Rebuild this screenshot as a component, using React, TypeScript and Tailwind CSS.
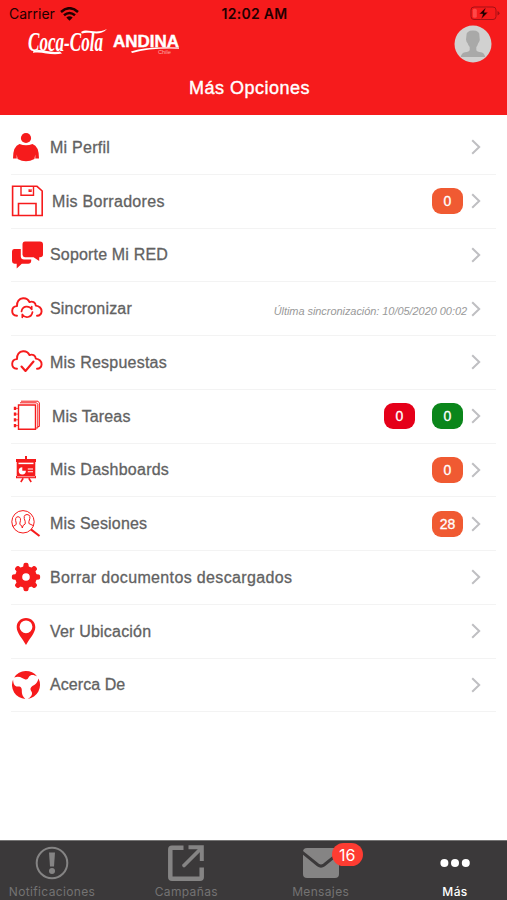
import type { ReactNode } from "react";

const RED = "#f61b1c";

function PersonIcon() {
  return (
    <svg width="30" height="30" viewBox="0 0 30 30" fill={RED}>
      <circle cx="15" cy="6" r="5.1" />
      <path d="M8.5 12Q15 14.5 21.5 12Q28 14 28 26.5H24.3V22.5L23.4 27Q15 31.5 6.6 27L5.7 22.5V26.5H2Q2 14 8.5 12Z" />
    </svg>
  );
}

function FloppyIcon() {
  return (
    <svg width="32" height="32" viewBox="0 0 32 32" fill="none" stroke={RED} strokeWidth="1.6">
      <path d="M1.6 1.3H26L31.2 6V30.5H1.6Z" />
      <path d="M10 1.3V10.2H22.5V1.3M18.2 4.2V6.2H20V4.2" strokeWidth="1.4" />
      <path d="M7.5 30.5V18.5H25V30.5" />
    </svg>
  );
}

function ChatIcon() {
  return (
    <svg className="ml-[2px]" width="32" height="30" viewBox="0 0 32 30" fill={RED}>
      <path d="M3 9H9.8V16.5Q10 19.5 13 19.5H20.2V21Q20 23.7 17.2 23.7H10.8L5.7 28.5V23.7H3.5Q1 23.5 1 21V11.5Q1 9 3 9Z" />
      <path d="M14 1.5H29Q32 1.5 32 4.5V14.5Q32 17.2 29 17.2H28.2V21L22.6 17.2H14Q11.5 17 11.5 14.5V4.5Q11.5 1.5 14 1.5Z" />
    </svg>
  );
}

function CloudIcon({ children }: { children: ReactNode }) {
  return (
    <svg className="ml-[2px]" width="32" height="26" viewBox="0 0 32 26" fill="none" stroke={RED} strokeWidth="1.9" strokeLinecap="round" strokeLinejoin="round">
      <path d="M6 19.8C2.6 19.6 1.1 17.4 1.2 14.8C1.3 12 3.5 10.3 6 10.1C5.6 5.5 8.2 2.5 12 2.2C15.2 2 17.5 3.7 18.5 6.1C21.5 4.8 24.5 6.5 24.8 9.6C28.2 9.9 30.8 12.4 30.6 15.4C30.4 18 28.8 19.7 26 19.8" />
      {children}
    </svg>
  );
}

function NotebookIcon() {
  return (
    <svg width="32" height="32" viewBox="0 0 32 32" fill="none" stroke={RED} strokeWidth="1.4">
      <path d="M7.5 5H24.5V29.2H7.5Z" />
      <path d="M9 2.8H25.5L26.8 4.2V28H24.5M10 1.2H27L28.4 3V26.5H26.8" strokeWidth="1" />
      <path d="M4 6.8V10M4 12.5V15.7M4 18.2V21.4M4 24V27.2" strokeWidth="2.4" />
      <path d="M5 8.4H7.5M5 14.1H7.5M5 19.8H7.5M5 25.6H7.5" strokeWidth=".8" />
    </svg>
  );
}

function BoardIcon() {
  return (
    <svg width="22" height="27" viewBox="0 0 22 27" fill={RED}>
      <path d="M10 0H12V4H10ZM1 3H21V6H1ZM1.7 6H20.3V20H1.7ZM1 20H21V22.3H1Z" />
      <path d="M3.5 7.4H18.5" stroke="white" strokeWidth="1.5" />
      <path d="M7.3 11.2A3.6 3.6 0 1 0 10.9 14.8H7.3Z" fill="white" />
      <path d="M12.8 13H18M12.8 15.8H18" stroke="white" strokeWidth="1.1" />
      <path d="M2 20.7H20" stroke="white" strokeWidth=".6" />
      <path d="M8.2 22.3L5.8 26M13.8 22.3L16.2 26" stroke={RED} strokeWidth="1.6" />
    </svg>
  );
}

function SearchPeopleIcon() {
  return (
    <svg width="30" height="27" viewBox="0 0 30 27" fill="none" stroke={RED} strokeWidth="1">
      <circle cx="12" cy="11.8" r="11.2" />
      <path d="M19.9 19.4L28.5 26" strokeWidth="2" />
      <path d="M2 16.5L5.2 14.5V13Q3.3 7 7 6.7Q10.8 7 8.9 13V14.5Q11.5 15.4 11.2 18M11.4 18Q11.2 15.2 14.2 14V11.5Q11.4 4.7 16 4.5Q20.7 4.7 17.9 11.5V13.5L22 15.5" />
    </svg>
  );
}

function GearIcon() {
  return (
    <svg width="30" height="30" viewBox="-15 -15 30 30" fill={RED}>
      <circle r="7.3" fill="none" stroke={RED} strokeWidth="7" />
      {[0, 45, 90, 135, 180, 225, 270, 315].map((a) => (
        <path key={a} transform={`rotate(${a})`} d="M-3 -9L-2.4 -13Q-2.1 -14.2 0 -14.2Q2.1 -14.2 2.4 -13L3 -9Z" />
      ))}
    </svg>
  );
}

function PinIcon() {
  return (
    <svg width="20" height="29" viewBox="0 0 20 29" fill={RED}>
      <path fillRule="evenodd" d="M10 1C4.5 1 .7 5 .7 10.2C.7 16 6.5 21.5 10 28C13.5 21.5 19.3 16 19.3 10.2C19.3 5 15.5 1 10 1ZM10 3.4A6.4 6.4 0 1 1 10 16.2A6.4 6.4 0 0 1 10 3.4Z" />
    </svg>
  );
}

function SwirlIcon() {
  return (
    <svg width="30" height="30" viewBox="-15 -15 30 30" fill={RED}>
      {[0, 120, 240].map((a) => (
        <path key={a} transform={`rotate(${a})`} d="M-11.8 -7.6A14 14 0 0 1 11.2 -8.4C7.5 -10.6 4.4 -10.4 3 -8.2C2 -6.4 1.6 -5.4 -.6 -5.6C-3.4 -6 -5.6 -9.6 -11.8 -7.6Z" />
      ))}
    </svg>
  );
}

function Chevron() {
  return (
    <svg className="shrink-0" width="10" height="16" viewBox="0 0 10 16" fill="none" stroke="#bfbfc2" strokeWidth="2">
      <path d="M1.2 1.2L8.2 8L1.2 14.8" />
    </svg>
  );
}

function Badge({ color, children }: { color: string; children: ReactNode }) {
  return (
    <span className={`flex h-[26px] w-[31px] items-center justify-center rounded-[9px] pt-px text-[14px] text-white [-webkit-text-stroke:0.3px] ${color}`}>
      {children}
    </span>
  );
}

type Item = { label: string; icon: ReactNode; track: string; wide?: boolean; extra?: ReactNode };

const items: Item[] = [
  { label: "Mi Perfil", icon: <PersonIcon />, track: "tracking-[0.25px]" },
  { label: "Mis Borradores", icon: <FloppyIcon />, track: "tracking-[0.3px]", wide: true, extra: <Badge color="bg-[#f05a32]">0</Badge> },
  { label: "Soporte Mi RED", icon: <ChatIcon />, track: "tracking-[0.17px]" },
  {
    label: "Sincronizar",
    icon: (
      <CloudIcon>
        <path d="M10.5 15.5C11.5 9.5 18 9.2 20.7 13.4V10.5M21.5 16C20.5 22 14 22.5 11.3 18.5V21.3" strokeWidth="1.7" />
      </CloudIcon>
    ),
    track: "tracking-[0.17px]",
    extra: <span className="mr-[-4px] pt-[5px] text-[11px] tracking-[-0.06px] italic text-[#999]">Última sincronización: 10/05/2020 00:02</span>,
  },
  {
    label: "Mis Respuestas",
    icon: (
      <CloudIcon>
        <path d="M10.5 17.5L14.5 22L22.5 12.5" strokeWidth="2.1" />
      </CloudIcon>
    ),
    track: "tracking-[0.22px]",
  },
  {
    label: "Mis Tareas",
    icon: <NotebookIcon />,
    track: "tracking-[0.15px]",
    wide: true,
    extra: (
      <div className="flex gap-[17px]">
        <Badge color="bg-[#e50019]">0</Badge>
        <Badge color="bg-[#0b861b]">0</Badge>
      </div>
    ),
  },
  { label: "Mis Dashboards", icon: <BoardIcon />, track: "tracking-[0.25px]", extra: <Badge color="bg-[#f05a32]">0</Badge> },
  { label: "Mis Sesiones", icon: <SearchPeopleIcon />, track: "tracking-[0.17px]", extra: <Badge color="bg-[#f05a32]">28</Badge> },
  { label: "Borrar documentos descargados", icon: <GearIcon />, track: "tracking-[0.35px]" },
  { label: "Ver Ubicación", icon: <PinIcon />, track: "tracking-[0.2px]" },
  { label: "Acerca De", icon: <SwirlIcon />, track: "tracking-[0.06px]" },
];

function Row({ item }: { item: Item }) {
  return (
    <li className="flex h-[53.75px] items-center border-b border-[#f3f3f3] pr-[15px]">
      <span className={`flex shrink-0 items-center [&>svg]:max-w-none [&>svg]:shrink-0 ${item.wide ? "w-[41px]" : "w-[39px] justify-center pr-[9px]"}`}>{item.icon}</span>
      <span className={`grow whitespace-nowrap pt-px text-[16px] text-[#626262] [-webkit-text-stroke:0.3px] ${item.track}`}>{item.label}</span>
      <span className="mr-[8px] flex whitespace-nowrap">{item.extra}</span>
      <Chevron />
    </li>
  );
}

function StatusBar() {
  return (
    <div className="flex h-[27px] items-center justify-between pl-[9px] pr-[7px] font-[Inter,sans-serif] text-[#220000]">
      <div className="flex w-[120px] items-center gap-[5px] text-[14px]">
        Carrier
        <svg width="19" height="14" viewBox="0 0 19 14" fill="none" stroke="#220000" strokeWidth="2.5">
          <path d="M1 5Q9.5 -2.6 18 5M4 8.3Q9.5 3.6 15 8.3" />
          <path d="M6.3 10.5Q9.5 8 12.7 10.5L9.5 13.7Z" fill="#220000" stroke="none" />
        </svg>
      </div>
      <span className="text-[14px] font-semibold tracking-[0.3px]">12:02 AM</span>
      <div className="flex w-[120px] justify-end">
        <svg width="30" height="15" viewBox="0 0 30 15" fill="none">
          <rect x="1" y="1" width="25" height="12.5" rx="3" stroke="#a51015" />
          <rect x="2.8" y="2.7" width="4" height="9" rx="1.5" fill="#ff4848" />
          <path d="M27.5 5V9.5Q29.5 8.5 29.5 7.2Q29.5 6 27.5 5Z" fill="#a51015" />
          <path d="M16 1.2L9.2 8H12.8L11.2 13.3L18 6.3H14.2Z" fill="#1c0000" stroke={RED} strokeWidth=".5" />
        </svg>
      </div>
    </div>
  );
}

function Brand() {
  return (
    <div className="flex">
      <svg className="overflow-visible" width="80" height="31" viewBox="0 0 80 31" fill="white">
        <text x="1" y="24" fontFamily="Liberation Serif, serif" fontStyle="italic" fontWeight="bold" fontSize="27" textLength="75" lengthAdjust="spacingAndGlyphs">Coca-Cola</text>
        <path d="M6 24.5C15 20.5 21 26.5 33 24.5L35 26.5C23 29 16 24 6 25.8ZM54 5C61 .5 67 8 80 2C72 10.5 63 3.5 55 6.5Z" />
      </svg>
      <svg className="overflow-visible" width="74" height="31" viewBox="80 0 74 31" fill="white">
        <text x="86" y="20" fontFamily="Liberation Sans, sans-serif" fontSize="16" fontWeight="bold" textLength="66" lengthAdjust="spacingAndGlyphs" stroke="white" strokeWidth=".4">ANDINA</text>
        <path d="M104 24.5Q121 19.2 152 20.6V21.7Q124 20.6 105 26Z" />
        <text x="131" y="27" fontFamily="Liberation Sans, sans-serif" fontSize="5.5" fillOpacity=".6" textLength="13" lengthAdjust="spacingAndGlyphs">Chile</text>
      </svg>
    </div>
  );
}

function Avatar() {
  return (
    <svg width="38" height="38" viewBox="0 0 38 38">
      <circle cx="19" cy="19" r="18.5" fill="#d1d1d0" />
      <path d="M12.4 11Q12 5.5 19 5.5Q26 5.5 25.4 11L25.8 15Q25 17.5 24.3 18Q23.3 21 22.3 22V25Q23 27 27 27.3Q30.5 28 31.2 32H6.7Q7.5 28 11 27.3Q15 27 15.7 25V22Q14.2 20.5 13.5 18Q12.3 17 12 14.5Z" fill="#a9a9a8" />
    </svg>
  );
}

function Tab({ label, active, children }: { label: string; active?: boolean; children: ReactNode }) {
  return (
    <div className={`flex w-[104px] flex-col items-center ${active ? "text-white" : "text-[#747373]"}`}>
      <div className="flex h-[44px] items-center">{children}</div>
      <span className={`-mt-px text-[12px] leading-[15px] tracking-[0.35px] ${active ? "font-medium" : ""}`}>{label}</span>
    </div>
  );
}

export default function App() {
  return (
    <div className="flex h-[900px] w-[507px] flex-col overflow-hidden bg-white font-['Liberation_Sans',Arial,sans-serif]">
      <header className="h-[114.5px] shrink-0 bg-[#f61b1c]">
        <StatusBar />
        <div className="flex h-[36px] items-start justify-between pl-[27px] pr-[15px]">
          <Brand />
          <div className="-mt-[2px]"><Avatar /></div>
        </div>
        <h1 className="pt-[12px] pr-[8px] text-center text-[18px] leading-[26px] tracking-[0.5px] text-white [-webkit-text-stroke:0.4px]">Más Opciones</h1>
      </header>
      <ul className="mx-[11px] grow pt-[6.5px]">
        {items.map((item) => (
          <Row key={item.label} item={item} />
        ))}
      </ul>
      <nav className="flex h-[60px] shrink-0 justify-between border-t border-[#757474] bg-[#3b393a] font-[Inter,sans-serif]">
        <Tab label="Notificaciones">
          <svg width="34" height="34" viewBox="0 0 34 34" fill="#858484">
            <circle cx="17" cy="17" r="15.3" fill="none" stroke="#858484" strokeWidth="2" />
            <path d="M14 6.5H20L19 20.5H15Z" />
            <circle cx="17" cy="25" r="3" />
          </svg>
        </Tab>
        <Tab label="Campañas">
          <svg width="36" height="36" viewBox="0 0 36 36" fill="none" stroke="#858484" strokeWidth="4.5">
            <path d="M15.5 2.8H4Q2.3 2.8 2.3 4.5V32Q2.3 33.7 4 33.7H32Q33.7 33.7 33.7 32V22.5" />
            <path d="M16 20.5L31 5.5" strokeWidth="3.7" strokeLinecap="round" />
            <path d="M20.5 2.3H33.8V16" strokeWidth="4" />
          </svg>
        </Tab>
        <Tab label="Mensajes">
          <div className="relative">
            <svg width="36" height="30" viewBox="0 0 36 30">
              <rect width="36" height="30" rx="4" fill="#858484" />
              <path d="M-1 4L15 17Q18 19.2 21 17L37 4" fill="none" stroke="#3b393a" strokeWidth="3" />
            </svg>
            <span className="absolute -top-[5px] left-[29px] flex h-[23px] w-[31px] items-center justify-center rounded-full bg-[#fe3c32] text-[16px] text-white">16</span>
          </div>
        </Tab>
        <Tab label="Más" active>
          <svg width="30" height="10" viewBox="0 0 30 10" fill="white">
            <circle cx="4.4" cy="5" r="4" />
            <circle cx="15" cy="5" r="4" />
            <circle cx="25.8" cy="5" r="4" />
          </svg>
        </Tab>
      </nav>
    </div>
  );
}
